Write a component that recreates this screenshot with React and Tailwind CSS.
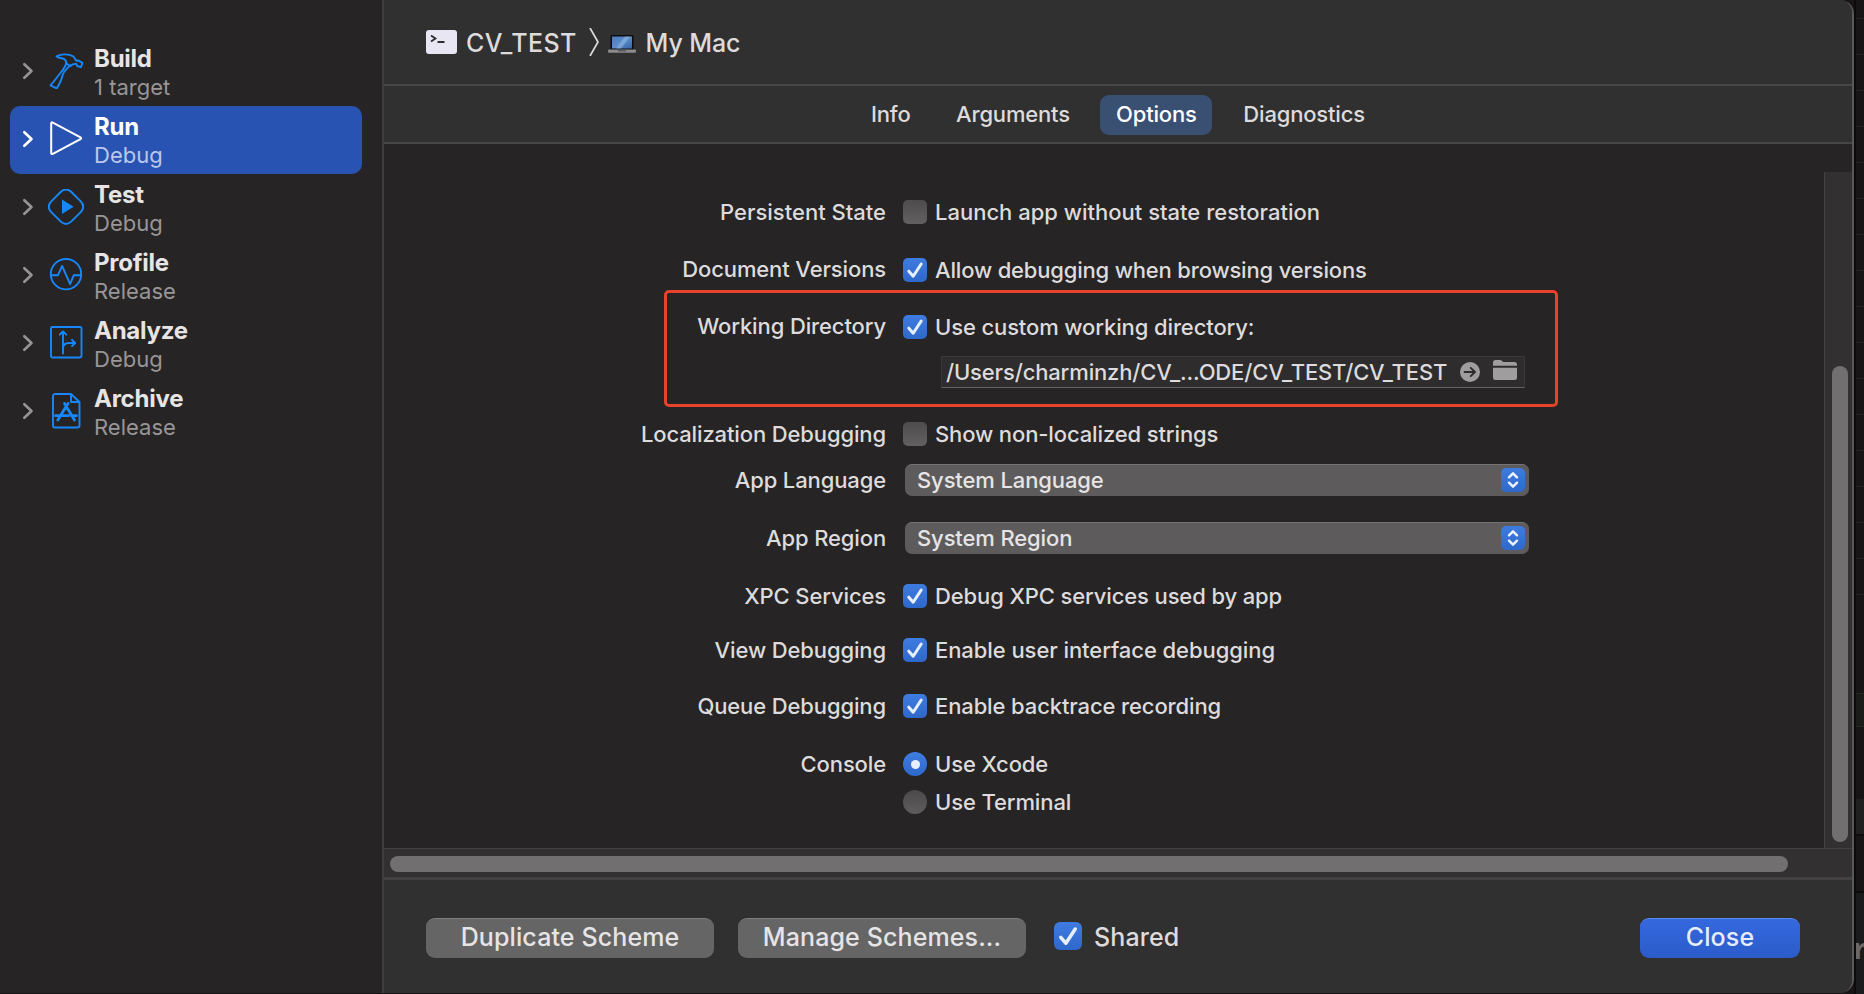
import clsx from "clsx";

function IconHammer() {
  return (
    <svg className="size-9" viewBox="0 0 36 36" fill="none" stroke="currentColor" strokeWidth="1.9" strokeLinejoin="round" strokeLinecap="round" aria-hidden>
      <path d="M8.500 3.300C13 .9 20.500.6 25 3.300c2 1.300 2 3.300 3.600 4.600l1.300-.6 4.600 2.500-1.600 4.400-3.800-1.200-.8-2c-2.600-.4-4.300.5-5.900 2l-4-2.400c.2-3-2-4.800-4.900-5.400-2-.4-3.600-.3-5-1.900Z" />
      <path d="M18.200 10.800c-.8 4-2.600 6.300-5.800 10C9.800 24 6.600 28.600 2.500 33.200l6.200 3c2.600-4.200 4.700-8 5.400-11.700.8-4.600 4.500-8 8.300-11.300" transform="translate(0 -.8)" />
    </svg>
  );
}

function IconRun() {
  return (
    <svg className="size-9" viewBox="0 0 36 36" fill="none" stroke="currentColor" strokeWidth="2" strokeLinejoin="round" aria-hidden>
      <path d="M3.200 2.500c0-1 .8-1.400 1.600-.9l27.700 14.700c.9.500.9 1.300 0 1.800L4.800 32.800c-.8.500-1.600.1-1.600-.9Z" />
    </svg>
  );
}

function IconTest() {
  return (
    <svg className="size-9" viewBox="0 0 36 36" fill="none" stroke="currentColor" strokeWidth="1.9" aria-hidden>
      <path d="M12.600 3c3.400-3.200 7.400-3.200 10.800 0l9.300 9.300c3.200 3.400 3.200 7.400 0 10.800l-9.300 9.300c-3.400 3.200-7.400 3.200-10.800 0l-9.300-9.300c-3.200-3.400-3.200-7.400 0-10.800Z" />
      <path d="M14 10.400V25L25.600 17.700Z" fill="currentColor" stroke="none" />
    </svg>
  );
}

function IconProfile() {
  return (
    <svg className="size-9" viewBox="0 0 36 36" fill="none" stroke="currentColor" strokeWidth="1.9" strokeLinejoin="round" aria-hidden>
      <circle cx="18" cy="17.200" r="15.200" />
      <path d="M3 18.200h7l4.100-9.300 8 18.300 3.700-9H33" />
    </svg>
  );
}

function IconAnalyze() {
  return (
    <svg className="size-9" viewBox="0 0 36 36" fill="none" stroke="currentColor" strokeWidth="1.900" strokeLinejoin="round" strokeLinecap="round" aria-hidden>
      <rect x="3" y="2" width="30.500" height="30.500" rx="1.500" />
      <path d="M15 28.500V7M11.700 9.700 15 6.400l3.300 3.300M15 23.500c0-4.500 2.400-5.500 6-5.500h5.500M24 14.800l3.200 3.200-3.200 3.200" />
    </svg>
  );
}

function IconArchive() {
  return (
    <svg className="size-9" viewBox="0 0 36 36" fill="none" stroke="currentColor" strokeWidth="1.900" strokeLinejoin="round" aria-hidden>
      <path d="M7 1h16l8.500 8v23.500a2 2 0 0 1-2 2H7a2 2 0 0 1-2-2V3a2 2 0 0 1 2-2Z" />
      <path d="M23 1v8h8.500" />
      <path d="M16.500 10.500 26.500 27M20 10.500 9.800 27M7.500 22.700h13M23.500 22.700h5" strokeWidth="2.800" strokeLinecap="round" />
    </svg>
  );
}

function IconChevron({ className }) {
  return (
    <svg className={className} viewBox="0 0 12 18" fill="none" stroke="currentColor" strokeWidth="2.600" strokeLinecap="round" strokeLinejoin="round" aria-hidden>
      <path d="M2.300 2.200 9.500 9l-7.200 6.800" />
    </svg>
  );
}

function IconTerminal() {
  return (
    <svg className="h-6 w-[31px]" viewBox="0 0 31 24" fill="none" aria-hidden>
      <rect width="31" height="24" rx="3" fill="#e9e6f3" />
      <path d="m5 5.500 4.500 3L5 11.500M11.500 12h7" stroke="#2d2b30" strokeWidth="1.800" />
    </svg>
  );
}

function IconLaptop() {
  return (
    <svg className="h-[19px] w-7" viewBox="0 0 28 19" fill="none" aria-hidden>
      <defs>
        <linearGradient id="screen" x1="0" y1="0" x2="1" y2="1">
          <stop offset="0" stopColor="#4c7cc0" />
          <stop offset=".5" stopColor="#5c8dc9" />
          <stop offset="1" stopColor="#3563ab" />
        </linearGradient>
      </defs>
      <rect x="2.500" y="0" width="23" height="15" rx="1" fill="#0d0d10" />
      <rect x="4" y="1.500" width="20" height="12" fill="url(#screen)" />
      <path d="M17 1.500h5L13 13.500H8Z" fill="#a5c8ea" opacity=".45" />
      <rect x="0" y="14.500" width="28" height="3.200" rx="1" fill="#8b8b8d" />
      <rect x="10" y="15" width="8" height="1.500" fill="#5c5c5e" />
    </svg>
  );
}

function IconCheck({ className }) {
  return (
    <svg className={className} viewBox="0 0 24 24" fill="none" stroke="#e8effc" strokeWidth="3" strokeLinecap="round" strokeLinejoin="round" aria-hidden>
      <path d="m5.800 13.200 4.400 5L18.200 6" />
    </svg>
  );
}

function IconGo() {
  return (
    <svg className="size-5" viewBox="0 0 20 20" fill="none" aria-hidden>
      <circle cx="10" cy="10" r="10" fill="#9f9d9e" />
      <path d="M4.500 10h10M10.700 5.800 15 10l-4.300 4.200" stroke="#2d2b2c" strokeWidth="1.800" strokeLinecap="round" strokeLinejoin="round" />
    </svg>
  );
}

function IconFolder() {
  return (
    <svg className="h-5 w-6" viewBox="0 0 24 20" fill="#9f9d9e" aria-hidden>
      <path d="M0 5.800V2.500A2.500 2.500 0 0 1 2.500 0h4.300c1 0 1.700.4 2.300 1l1 .9h11.400A2.500 2.500 0 0 1 24 4.400v1.400Z" />
      <path d="M0 7.800h24v9.700a2.500 2.500 0 0 1-2.500 2.500h-19A2.500 2.500 0 0 1 0 17.500Z" />
    </svg>
  );
}

const actions = [
  { title: "Build", detail: "1 target", Icon: IconHammer },
  { title: "Run", detail: "Debug", Icon: IconRun, active: true },
  { title: "Test", detail: "Debug", Icon: IconTest },
  { title: "Profile", detail: "Release", Icon: IconProfile },
  { title: "Analyze", detail: "Debug", Icon: IconAnalyze },
  { title: "Archive", detail: "Release", Icon: IconArchive },
];

function Sidebar() {
  return (
    <aside className="w-96 shrink-0 border-r-2 border-[#3f3e3f] pt-[38px] pl-2.5">
      {actions.map(({ title, detail, Icon, active }) => (
        <div
          key={title}
          className={clsx("flex h-[68px] w-[352px] items-center rounded-[10px]", active && "bg-[#2953b2]")}
        >
          <IconChevron className={clsx("mb-0.5 ml-3 h-[18px] w-3", active ? "text-white" : "text-[#969596]")} />
          <span className={clsx("ml-3.5 pb-[3px]", active ? "text-white" : "text-[#1688fb]")}>
            <Icon />
          </span>
          <div className="ml-2.5 flex flex-col">
            <span className={clsx("text-[24px] leading-[29px] font-bold tracking-[-0.25px]", active ? "text-white" : "text-[#e6e4e5]")}>{title}</span>
            <span className={clsx("text-[22px] leading-[28px]", active ? "text-[#b9c8ec]" : "text-[#989697]")}>{detail}</span>
          </div>
        </div>
      ))}
    </aside>
  );
}

function Checkbox({ checked, large }) {
  return (
    <span
      className={clsx(
        "shrink-0 bg-gradient-to-b",
        large ? "size-7 rounded-[6px]" : "size-6 rounded-[5px]",
        checked ? "from-[#3f7be0] to-[#2f68cb]" : "from-[#4e4c4d] to-[#626061]"
      )}
    >
      {checked && <IconCheck className="size-full" />}
    </span>
  );
}

function Radio({ checked }) {
  return (
    <span
      className={clsx(
        "flex size-6 shrink-0 items-center justify-center rounded-full bg-gradient-to-b",
        checked ? "from-[#3f7be0] to-[#2f68cb]" : "from-[#4b494a] to-[#5f5d5e]"
      )}
    >
      {checked && <span className="size-[9px] rounded-full bg-[#e8effc]" />}
    </span>
  );
}

function Row({ label, className, raised, children }) {
  return (
    <div className={clsx("flex items-center", className)}>
      <span className={clsx("w-[502px] shrink-0 text-right", raised && "pb-[3px]")}>{label}</span>
      {children}
    </div>
  );
}

function Option({ className, children }) {
  return <span className={clsx("ml-2", className)}>{children}</span>;
}

function Select({ value }) {
  return (
    <div className="ml-[19px] flex h-8 w-[624px] items-center justify-between rounded-[7px] border-t border-[#747273] bg-[#5d5b5c] pr-1 pl-3 text-[#e6e4e5]">
      <span className="pb-0.5">{value}</span>
      <span className="mb-px flex size-6 items-center justify-center rounded-[5px] bg-gradient-to-b from-[#3f7be0] to-[#2f68cb]">
        <svg className="size-6" viewBox="0 0 24 24" fill="none" stroke="#eef3fd" strokeWidth="2.400" strokeLinecap="round" strokeLinejoin="round" aria-hidden>
          <path d="m8 9.300 4-4 4 4M8 14.700l4 4 4-4" />
        </svg>
      </span>
    </div>
  );
}

function Options() {
  return (
    <div className="relative flex h-[705px] border-b border-[#434142]">
      <div className="w-[1440px] pt-14 text-[22px] leading-6 font-medium tracking-[-0.12px] text-[#dddbdc]">
        <Row label="Persistent State" className="h-6 tracking-[0px]">
          <span className="ml-[17px] flex"><Checkbox /></span>
          <Option>Launch app without state restoration</Option>
        </Row>
        <Row label="Document Versions" className="mt-[34px] h-6" raised>
          <span className="ml-[17px] flex"><Checkbox checked /></span>
          <Option className="tracking-[-0.18px]">Allow debugging when browsing versions</Option>
        </Row>
        <Row label="Working Directory" className="mt-[33px] h-6" raised>
          <span className="ml-[17px] flex"><Checkbox checked /></span>
          <Option>Use custom working directory:</Option>
        </Row>
        <div className="mt-[17px] ml-[557px] flex h-8 w-[584px] items-center border border-[#3b393a] border-b-[#646263] bg-[#2e2c2d] pr-[7px] pl-1">
          <span className="flex-1 tracking-[-0.15px] whitespace-nowrap">/Users/charminzh/CV_...ODE/CV_TEST/CV_TEST</span>
          <IconGo />
          <span className="ml-[13px] pb-1"><IconFolder /></span>
        </div>
        <Row label="Localization Debugging" className="mt-[34px] h-6">
          <span className="ml-[17px] flex"><Checkbox /></span>
          <Option>Show non-localized strings</Option>
        </Row>
        <Row label="App Language" className="mt-[18px] h-8">
          <Select value="System Language" />
        </Row>
        <Row label="App Region" className="mt-[26px] h-8">
          <Select value="System Region" />
        </Row>
        <Row label="XPC Services" className="mt-[30px] h-6">
          <span className="ml-[17px] flex"><Checkbox checked /></span>
          <Option>Debug XPC services used by app</Option>
        </Row>
        <Row label="View Debugging" className="mt-[30px] h-6">
          <span className="ml-[17px] flex"><Checkbox checked /></span>
          <Option className="tracking-[-0.07px]">Enable user interface debugging</Option>
        </Row>
        <Row label="Queue Debugging" className="mt-8 h-6">
          <span className="ml-[17px] flex"><Checkbox checked /></span>
          <Option>Enable backtrace recording</Option>
        </Row>
        <Row label="Console" className="mt-[34px] h-6">
          <span className="ml-[17px] flex"><Radio checked /></span>
          <Option>Use Xcode</Option>
        </Row>
        <Row className="mt-3.5 h-6">
          <span className="ml-[17px] flex"><Radio /></span>
          <Option>Use Terminal</Option>
        </Row>
      </div>
      <div className="mt-7 flex-1 border-l border-[#434142] bg-[#323031] pt-[194px] pl-[7px]">
        <div className="h-[476px] w-4 rounded-full bg-[#716f70]" />
      </div>
      {/* highlight over the working directory rows */}
      <div className="absolute top-[146px] left-[280px] h-[117px] w-[894px] rounded-[5px] border-[3px] border-[#e8432a]" />
    </div>
  );
}

const tabs = ["Info", "Arguments", "Options", "Diagnostics"];

// sliver of the editor window behind the sheet
function Backdrop() {
  return (
    <div className="flex h-[994px] w-2.5 flex-col overflow-hidden border-l-2 border-[#0c0b0c]">
      <div className="h-[18px]" />
      {Array.from({ length: 16 }, (_, i) => (
        <div key={i} className="h-9 border-t border-[#242223]" />
      ))}
      <div className="h-[99px] border-t border-[#242223]" />
      <div className="h-[34px] border-y border-[#232b20] bg-[#191c18]" />
      <div className="h-[72px]" />
      <div className="h-[37px] border-b-2 border-[#0c0b0c] bg-[#202021]" />
      <div className="h-[57px] border-b-2 border-[#0c0b0c]" />
      <div className="flex-1 overflow-hidden bg-[#191b1d] pt-10 font-['Liberation_Mono',monospace] text-[30px] leading-9 font-bold text-[#6c6868]">
        <span className="-ml-1">r</span>
      </div>
    </div>
  );
}

export default function App() {
  return (
    <div className="h-[994px] w-[1864px] overflow-hidden bg-[#171516] font-['Inter',sans-serif] text-[#dddbdc]">
      <div className="flex">
        <div className="flex h-[993px] w-[1854px] shrink-0 overflow-hidden rounded-r-[14px] border-r-2 border-[#5a5959] bg-[#262425]">
          <Sidebar />
          <main className="flex min-w-0 flex-1 flex-col">
            <header className="flex h-[86px] items-center border-b-2 border-[#474747] bg-[#303030] pl-[42px] text-[25px] font-medium">
              <IconTerminal />
              <span className="ml-[9px] pt-[3px] tracking-[0.35px] whitespace-nowrap">CV_TEST</span>
              <svg className="ml-3 h-7 w-2.5" viewBox="0 0 10 28" fill="none" stroke="currentColor" strokeWidth="1.700" aria-hidden>
                <path d="m1 0 8 14-8 14" />
              </svg>
              <span className="ml-[9px] pt-1"><IconLaptop /></span>
              <span className="ml-2.5 pt-[3px] tracking-[-0.1px]">My Mac</span>
            </header>
            <nav className="flex h-[58px] items-center border-b-2 border-[#474747] bg-[#303030] pt-px pl-[472px] text-[22px] font-medium tracking-[-0.18px]">
              {tabs.map((tab) => (
                <span
                  key={tab}
                  className={clsx(
                    "flex h-10 items-center rounded-[9px] pb-px",
                    tab === "Options" ? "mr-4 w-28 justify-center bg-[#3a5073] text-white" : "mr-[15.5px] px-[15px]"
                  )}
                >
                  {tab}
                </span>
              ))}
            </nav>
            <Options />
            <div className="h-[31px] border-b-[3px] border-[#434243] bg-[#323031] pt-[7px] pl-1.5">
              <div className="h-4 w-[1398px] rounded-full bg-[#716f70]" />
            </div>
            <footer className="flex flex-1 items-start bg-[#303030] pt-[38px] pl-[42px] text-[25px] font-medium tracking-[0.12px]">
              <button className="h-10 w-72 rounded-[9px] border-t border-[#7c7c7c] bg-[#656565] pb-0.5 text-[#e6e4e5]">Duplicate Scheme</button>
              <button className="ml-6 h-10 w-72 rounded-[9px] border-t border-[#7c7c7c] bg-[#656565] pb-0.5 text-[#e6e4e5]">Manage Schemes...</button>
              <label className="ml-7 flex h-9 items-center">
                <Checkbox checked large />
                <span className="ml-3 pt-[3px]">Shared</span>
              </label>
              <button className="mr-[52px] ml-auto h-10 w-40 rounded-[9px] border-t border-[#5b8bec] bg-gradient-to-b from-[#3468de] to-[#2c5cca] pb-0.5 text-[#e6edfc]">Close</button>
            </footer>
          </main>
        </div>
        <Backdrop />
      </div>
    </div>
  );
}
